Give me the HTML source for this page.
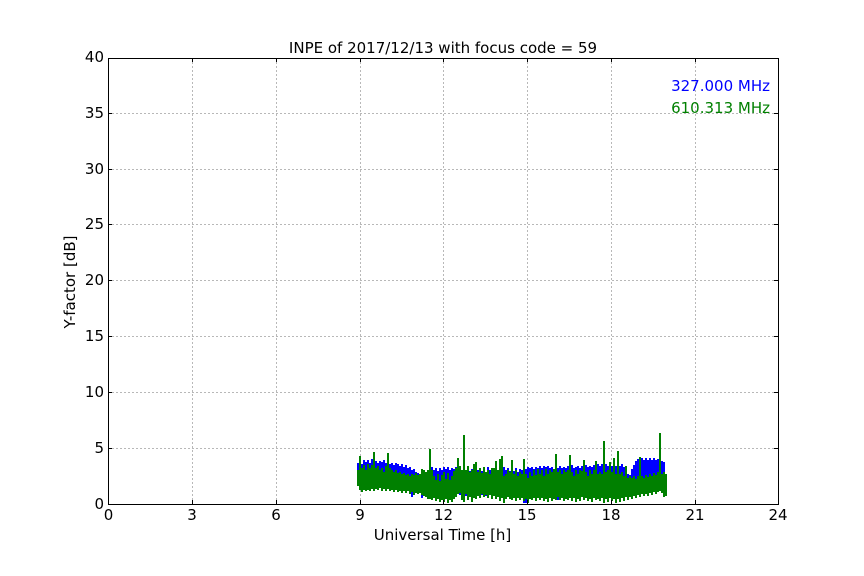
<!DOCTYPE html>
<html><head><meta charset="utf-8"><title>INPE</title>
<style>
html,body{margin:0;padding:0;background:#fff;width:864px;height:576px;overflow:hidden}
svg{display:block}
text{font-family:"DejaVu Sans",sans-serif;font-size:15px;fill:#000}
.xt{text-anchor:middle}
.yt{text-anchor:end}
</style></head><body>
<svg width="864" height="576" viewBox="0 0 864 576" xmlns="http://www.w3.org/2000/svg">
<rect width="864" height="576" fill="#fff"/>
<g stroke="#b8b8b8" stroke-width="1" stroke-dasharray="2 2" shape-rendering="crispEdges" fill="none">
<path d="M192.500 58V504M276.500 58V504M360.500 58V504M443.500 58V504M527.500 58V504M611.500 58V504M695.500 58V504"/>
<path d="M108 448.500H778M108 392.500H778M108 336.500H778M108 280.500H778M108 224.500H778M108 169.500H778M108 113.500H778"/>
</g>
<path fill="none" stroke="#0000ff" stroke-width="2" shape-rendering="crispEdges" d="M358 463V486M360 461V486M362 464V486M364 460V486M366 462V486M368 460V486M370 463V486M372 459V486M374 462V486M376 461V486M378 463V486M380 461V486M382 462V486M384 460V486M386 463V486M388 462V486M390 464V486M392 463V486M394 465V486M396 463V486M398 464V486M400 466V486M402 464V486M404 467V486M406 465V486M408 468V486M410 467V486M412 470V497M414 469V486M416 472V486M418 473V486M420 475V486M422 476V498M424 476V486M426 474V486M428 470V486M430 469V486M432 467V486M434 470V486M436 468V486M438 471V486M440 468V486M442 470V486M444 467V486M446 469V486M448 467V486M450 470V486M452 468V486M454 469V486M456 467V486M458 469V486M460 468V495M462 470V486M464 470V486M466 472V496M468 473V486M470 471V486M472 469V486M474 471V486M476 468V486M478 470V486M480 468V486M482 471V495M484 469V486M486 472V496M488 467V486M490 470V486M492 468V486M494 471V486M496 469V486M498 470V486M500 468V486M502 469V486M504 467V486M506 470V486M508 468V486M510 471V486M512 469V486M514 471V486M516 468V486M518 472V486M520 469V486M522 470V486M524 468V503M526 469V503M528 467V486M530 468V486M532 467V486M534 469V486M536 467V486M538 468V486M540 466V486M542 468V486M544 466V486M546 467V486M548 466V486M550 468V486M552 467V486M554 469V486M556 467V486M558 468V500M560 466V486M562 468V486M564 467V486M566 468V486M568 466V486M570 468V486M572 465V486M574 468V486M576 467V486M578 466V486M580 468V486M582 466V486M584 467V486M586 465V486M588 467V486M590 466V486M592 467V501M594 465V486M596 467V486M598 464V486M600 466V486M602 464V486M604 466V486M606 464V486M608 466V486M610 464V486M612 466V486M614 463V486M616 466V486M618 464V486M620 466V486M622 464V486M624 467V486M626 470V486M628 474V486M630 475V486M632 469V486M634 465V486M636 461V486M638 459V486M640 461V486M642 458V486M644 460V486M646 458V486M648 460V486M650 458V486M652 460V486M654 458V486M656 460V486M658 459V486M660 462V486M662 461V486M664 462V497"/>
<path fill="none" stroke="#008000" stroke-width="2" shape-rendering="crispEdges" d="M358 470V486M360 456V490M362 468V492M364 465V490M366 470V491M368 464V490M370 468V491M372 465V489M374 452V491M376 468V489M378 466V490M380 470V488M382 468V491M384 472V489M386 466V491M388 453V489M390 468V491M392 470V490M394 472V492M396 470V490M398 473V492M400 472V491M402 474V493M404 473V491M406 475V493M408 474V491M410 476V494M412 474V492M414 475V495M416 473V493M418 475V494M420 474V493M422 469V495M424 470V496M426 472V497M428 470V499M430 449V499M432 470V500M434 476V498M436 480V501M438 474V499M440 481V502M442 475V500M444 472V502M446 479V499M448 473V503M450 480V500M452 476V502M454 471V499M456 468V497M458 458V494M460 466V493M462 470V500M464 435V502M466 470V494M468 466V500M470 472V497M472 470V502M474 464V498M476 462V499M478 472V496M480 468V498M482 473V494M484 467V497M486 472V495M488 470V498M490 474V495M492 468V499M494 468V496M496 461V499M498 470V497M500 459V501M502 456V498M504 476V503M506 474V499M508 470V497M510 472V499M512 460V500M514 474V498M516 470V501M518 476V498M520 472V500M522 474V498M524 459V501M526 474V499M528 478V503M530 472V499M532 476V500M534 470V498M536 475V501M538 469V498M540 474V500M542 470V498M544 476V501M546 469V499M548 474V502M550 470V498M552 472V501M554 469V499M556 454V500M558 472V497M560 470V500M562 474V498M564 470V501M566 472V499M568 470V500M570 455V498M572 472V501M574 476V498M576 470V502M578 474V499M580 470V501M582 471V497M584 460V500M586 472V498M588 476V501M590 470V499M592 474V502M594 470V498M596 461V500M598 474V499M600 472V501M602 474V498M604 441V503M606 472V499M608 470V502M610 462V498M612 472V501M614 458V499M616 474V503M618 451V499M620 474V502M622 472V498M624 476V501M626 466V497M628 478V500M630 476V497M632 478V499M634 476V496M636 479V498M638 476V495M640 457V497M642 476V494M644 478V496M646 475V494M648 477V496M650 474V493M652 476V495M654 473V492M656 475V494M658 472V492M660 433V491M662 474V493M664 472V497M666 474V496"/>
<path d="M108.500 58.500H778.500V504.500H108.500Z" fill="none" stroke="#000" stroke-width="1" shape-rendering="crispEdges"/>
<g stroke="#000" stroke-width="1" shape-rendering="crispEdges" fill="none">
<path d="M192.500 504v-4M276.500 504v-4M360.500 504v-4M443.500 504v-4M527.500 504v-4M611.500 504v-4M695.500 504v-4M192.500 58v4M276.500 58v4M360.500 58v4M443.500 58v4M527.500 58v4M611.500 58v4M695.500 58v4"/>
<path d="M108 448.500h4M108 392.500h4M108 336.500h4M108 280.500h4M108 224.500h4M108 169.500h4M108 113.500h4M778 448.500h-4M778 392.500h-4M778 336.500h-4M778 280.500h-4M778 224.500h-4M778 169.500h-4M778 113.500h-4"/>
</g>
<text x="443" y="53" text-anchor="middle">INPE of 2017/12/13 with focus code = 59</text>
<text class="xt" x="108.500" y="520">0</text><text class="xt" x="192" y="520">3</text><text class="xt" x="276" y="520">6</text><text class="xt" x="360" y="520">9</text><text class="xt" x="443.500" y="520">12</text><text class="xt" x="527" y="520">15</text><text class="xt" x="611" y="520">18</text><text class="xt" x="695" y="520">21</text><text class="xt" x="778" y="520">24</text>
<text class="yt" x="104" y="509">0</text><text class="yt" x="104" y="453">5</text><text class="yt" x="104" y="397">10</text><text class="yt" x="104" y="341">15</text><text class="yt" x="104" y="285">20</text><text class="yt" x="104" y="229">25</text><text class="yt" x="104" y="174">30</text><text class="yt" x="104" y="118">35</text><text class="yt" x="104" y="62">40</text>
<text x="442.500" y="540" text-anchor="middle">Universal Time [h]</text>
<text transform="translate(75 282) rotate(-90)" text-anchor="middle">Y-factor [dB]</text>
<text x="770" y="91" text-anchor="end" style="fill:#0000ff">327.000 MHz</text>
<text x="770" y="113" text-anchor="end" style="fill:#008000">610.313 MHz</text>
</svg>
</body></html>
